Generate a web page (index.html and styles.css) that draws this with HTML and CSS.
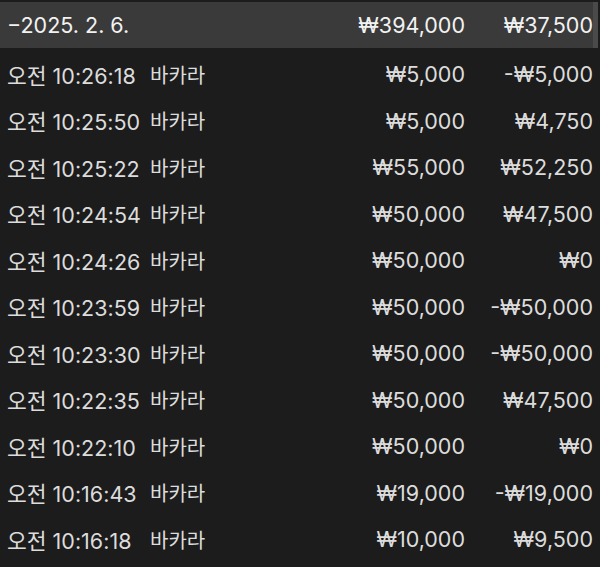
FILE: index.html
```html
<!DOCTYPE html>
<html lang="ko">
<head>
<meta charset="utf-8">
<link rel="stylesheet" href="styles.css">
</head>
<body>
<div class="wrap">
  <div class="list">
    <div class="row head"><span class="date">−2025. 2. 6.</span><span class="amt">₩394,000</span><span class="res">₩37,500</span></div>
    <div class="row"><span class="time">오전 10:26:18</span><span class="game">바카라</span><span class="amt">₩5,000</span><span class="res">-₩5,000</span></div>
    <div class="row"><span class="time">오전 10:25:50</span><span class="game">바카라</span><span class="amt">₩5,000</span><span class="res">₩4,750</span></div>
    <div class="row"><span class="time">오전 10:25:22</span><span class="game">바카라</span><span class="amt">₩55,000</span><span class="res">₩52,250</span></div>
    <div class="row"><span class="time">오전 10:24:54</span><span class="game">바카라</span><span class="amt">₩50,000</span><span class="res">₩47,500</span></div>
    <div class="row"><span class="time">오전 10:24:26</span><span class="game">바카라</span><span class="amt">₩50,000</span><span class="res">₩0</span></div>
    <div class="row"><span class="time">오전 10:23:59</span><span class="game">바카라</span><span class="amt">₩50,000</span><span class="res">-₩50,000</span></div>
    <div class="row"><span class="time">오전 10:23:30</span><span class="game">바카라</span><span class="amt">₩50,000</span><span class="res">-₩50,000</span></div>
    <div class="row"><span class="time">오전 10:22:35</span><span class="game">바카라</span><span class="amt">₩50,000</span><span class="res">₩47,500</span></div>
    <div class="row"><span class="time">오전 10:22:10</span><span class="game">바카라</span><span class="amt">₩50,000</span><span class="res">₩0</span></div>
    <div class="row"><span class="time">오전 10:16:43</span><span class="game">바카라</span><span class="amt">₩19,000</span><span class="res">-₩19,000</span></div>
    <div class="row"><span class="time">오전 10:16:18</span><span class="game">바카라</span><span class="amt">₩10,000</span><span class="res">₩9,500</span></div>
  </div>
  <div class="scroll"><div class="thumb"></div></div>
</div>
</body>
</html>
```
FILE: styles.css
```css
html, body {
  margin: 0;
  padding: 0;
  background: #1c1c1c;
  height: 100%;
  overflow: hidden;
}
.wrap {
  display: flex;
  padding-top: 2px;
  height: 565px;
}
.list {
  flex: 1;
  font-family: "Inter", "Noto Sans CJK KR", sans-serif;
  font-size: 21.5px;
  color: #dcdcdc;
}
.row {
  display: flex;
  align-items: center;
  box-sizing: border-box;
  height: 46.5px;
  padding-top: 6px;
  padding-left: 7px;
  white-space: nowrap;
}
.row.head {
  height: 46px;
  padding-top: 0;
  background: #3a3a3a;
  color: #f2f2f2;
}
.time { width: 143px; }
.game { width: 130px; font-family: "Noto Sans CJK KR", sans-serif; font-size: 20px; }
.date { flex: 0 0 273px; }
.amt { width: 185px; text-align: right; }
.res { flex: 1; text-align: right; }
.scroll {
  width: 7px;
  display: flex;
  flex-direction: column;
}
.thumb {
  height: 46px;
  background: #4a4a4a;
  width: 5px;
}
```
